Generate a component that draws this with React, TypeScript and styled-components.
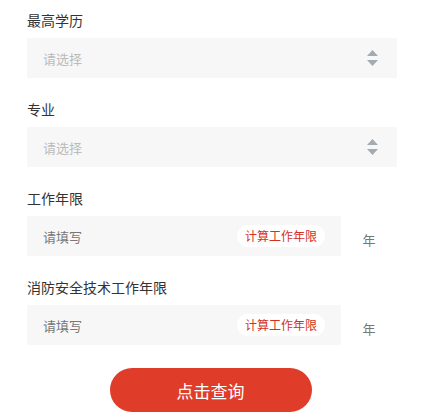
import React from 'react';
import styled, { createGlobalStyle } from 'styled-components';

const GlobalStyle = createGlobalStyle`
  html, body {
    margin: 0;
    padding: 0;
    background: #fff;
    font-family: "Noto Sans CJK SC", "Noto Sans", sans-serif;
  }
`;

const Page = styled.div`
  width: 421px;
  padding: 10px 24px 0 27px;
  box-sizing: border-box;
  display: flex;
  flex-direction: column;
  gap: 21px;
`;

const Field = styled.div`
  display: flex;
  flex-direction: column;
  gap: 8px;
`;

const Label = styled.div`
  font-size: 14px;
  line-height: 20px;
  height: 20px;
  color: #333;
`;

const Row = styled.div`
  display: flex;
  align-items: center;
`;

const Box = styled.div<{ $narrow?: boolean }>`
  height: 40px;
  width: ${(p) => (p.$narrow ? '314px' : '370px')};
  background: #f7f7f7;
  box-sizing: border-box;
  padding: 0 16px;
  display: flex;
  align-items: center;
  justify-content: space-between;
`;

const Placeholder = styled.span<{ $dark?: boolean }>`
  font-size: 13px;
  color: ${(p) => (p.$dark ? '#777' : '#bbb')};
`;

const Pill = styled.span`
  height: 22px;
  line-height: 22px;
  padding: 0 8px;
  border-radius: 11px;
  background: #fff;
  color: #d3301e;
  font-size: 12px;
`;

const Unit = styled.span`
  width: 56px;
  text-align: center;
  font-size: 13px;
  color: #777;
  padding-top: 6px;
`;

const Submit = styled.button`
  align-self: center;
  margin: 2px 0 0 -3px;
  width: 202px;
  height: 44px;
  border: none;
  border-radius: 22px;
  background: #e03c2a;
  color: #fff;
  font-size: 17px;
  font-family: inherit;
  cursor: pointer;
`;

const SortIcon = () => (
  <svg width="11" height="17" viewBox="0 0 11 17" style={{ marginRight: 3 }}>
    <path d="M5.5 0 L11 6 L0 6 Z" fill="#a3abb2" />
    <path d="M0 10 L11 10 L5.5 16 Z" fill="#a3abb2" />
  </svg>
);

const SelectField = ({ label }: { label: string }) => (
  <Field>
    <Label>{label}</Label>
    <Box>
      <Placeholder>请选择</Placeholder>
      <SortIcon />
    </Box>
  </Field>
);

const YearField = ({ label }: { label: string }) => (
  <Field>
    <Label>{label}</Label>
    <Row>
      <Box $narrow>
        <Placeholder $dark>请填写</Placeholder>
        <Pill>计算工作年限</Pill>
      </Box>
      <Unit>年</Unit>
    </Row>
  </Field>
);

const App = () => (
  <>
    <GlobalStyle />
    <Page>
      <SelectField label="最高学历" />
      <SelectField label="专业" />
      <YearField label="工作年限" />
      <YearField label="消防安全技术工作年限" />
      <Submit type="button">点击查询</Submit>
    </Page>
  </>
);

export default App;
